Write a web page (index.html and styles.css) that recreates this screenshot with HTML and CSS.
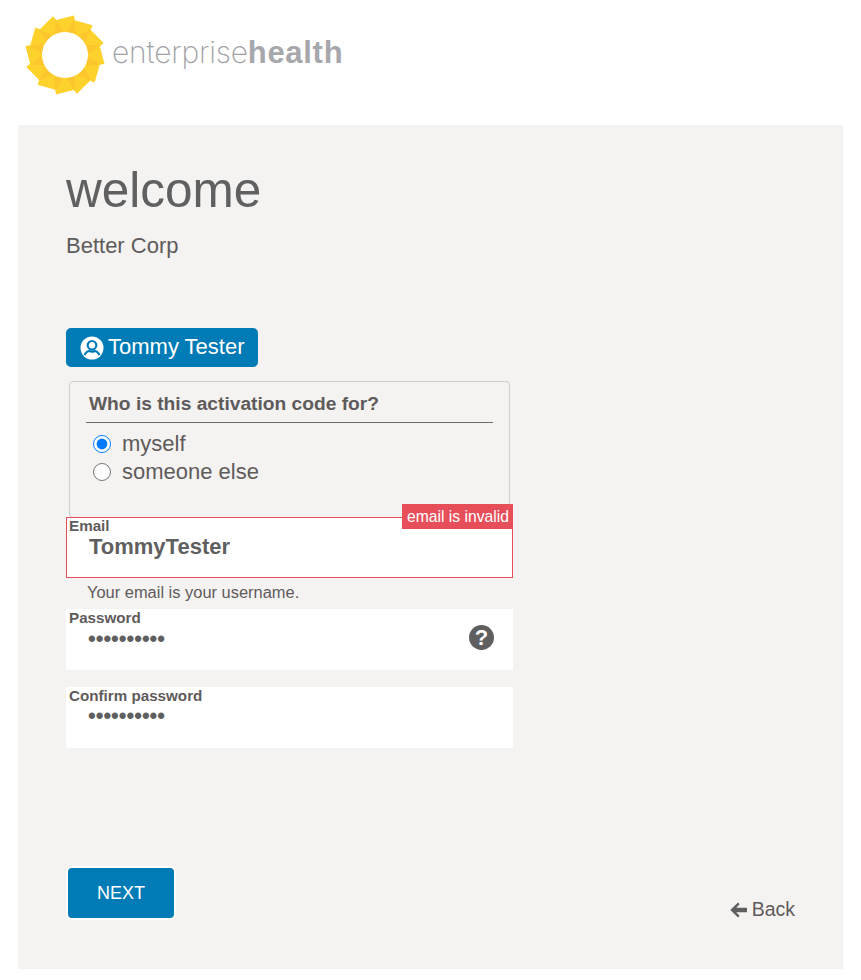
FILE: index.html
```html
<!DOCTYPE html>
<html lang="en">
<head>
    <meta charset="UTF-8">
    <meta name="viewport" content="width=device-width, initial-scale=1.0">
    <title>Welcome</title>
    <link rel="stylesheet" href="styles.css">
</head>
<body>
    <header class="top">
        <svg class="sun" width="82" height="82" viewBox="-41 -41 82 82" aria-hidden="true">
            <defs>
                <polygon id="shade" points="9,-35 1,-22 11,-22" fill="#fdc52e"/>
            </defs>
            <polygon fill="#fed22c" points="9,-39.500 9.800,-34.700 27.500,-29.700 25.800,-25.100 38.700,-12 34.900,-8.800 39.500,9 34.700,9.800 29.700,27.500 25.100,25.800 12,38.700 8.800,34.900 -9,39.500 -9.800,34.700 -27.500,29.700 -25.800,25.100 -38.700,12 -34.900,8.800 -39.500,-9 -34.700,-9.800 -29.700,-27.500 -25.100,-25.800 -12,-38.700 -8.800,-34.900"/>
            <use href="#shade"/>
            <use href="#shade" transform="rotate(30)"/>
            <use href="#shade" transform="rotate(60)"/>
            <use href="#shade" transform="rotate(90)"/>
            <use href="#shade" transform="rotate(120)"/>
            <use href="#shade" transform="rotate(150)"/>
            <use href="#shade" transform="rotate(180)"/>
            <use href="#shade" transform="rotate(210)"/>
            <use href="#shade" transform="rotate(240)"/>
            <use href="#shade" transform="rotate(270)"/>
            <use href="#shade" transform="rotate(300)"/>
            <use href="#shade" transform="rotate(330)"/>
            <circle r="23" fill="#fff"/>
        </svg>
        <div class="brand">enterprise<b>health</b></div>
    </header>

    <main class="panel">
        <h1>welcome</h1>
        <p class="company">Better Corp</p>

        <div class="user-tag">
            <svg width="24" height="24" viewBox="0 0 24 24" aria-hidden="true">
                <circle cx="12" cy="12" r="11.500" fill="#fff"/>
                <circle cx="12" cy="9.300" r="4.300" fill="none" stroke="#007bb5" stroke-width="2.200"/>
                <path d="M4.600 19.200c1.200-3 3.400-4.200 4.900-4.200 1 .5 1.700.7 2.500.7s1.600-.2 2.500-.7c1.600 0 3.700 1.200 4.900 4.200" fill="none" stroke="#007bb5" stroke-width="2.200"/>
            </svg>
            <span>Tommy Tester</span>
        </div>

        <form class="signup">
            <fieldset class="who">
                <legend>Who is this activation code for?</legend>
                <label class="choice"><input type="radio" name="who" checked> myself</label>
                <label class="choice"><input type="radio" name="who"> someone else</label>
            </fieldset>

            <div class="field invalid">
                <label for="email">Email</label>
                <input id="email" type="text" value="TommyTester">
                <span class="error">email is invalid</span>
            </div>
            <div class="hint">Your email is your username.</div>

            <div class="field">
                <label for="pw">Password</label>
                <input id="pw" type="password" value="1234567890">
                <span class="help">?</span>
            </div>

            <div class="field gap">
                <label for="pw2">Confirm password</label>
                <input id="pw2" type="password" value="1234567890">
            </div>
        </form>

        <div class="actions">
            <button class="next" type="button">NEXT</button>
            <a class="back" href="#">
                <svg width="17" height="16" viewBox="0 0 17 16" aria-hidden="true">
                    <path d="M8 .6 9.600 2.200 6.200 5.800H17v4.400H6.200l3.400 3.600L8 15.400.3 8z" fill="#5f5f5f"/>
                </svg>
                Back
            </a>
        </div>
    </main>
</body>
</html>
```

FILE: styles.css
```css
* {
    box-sizing: border-box;
    font-family: "Liberation Sans", Arial, sans-serif;
}
body {
    margin: 0;
    background-color: white;
    color: #5f5b5b;
}
.top {
    height: 125px;
    padding: 14px 0 0 24px;
    display: flex;
    align-items: flex-start;
}
.sun {
    flex: none;
}
.brand {
    margin: 18px 0 0 6px;
    font-family: Inter, sans-serif;
    font-weight: 200;
    font-size: 30px;
    letter-spacing: -0.2px;
    line-height: 40px;
    color: #a0a1a5;
}
.brand b {
    font-family: "Liberation Sans", sans-serif;
    font-weight: 700;
    font-size: 31px;
    letter-spacing: 0.7px;
    color: #a7a8ab;
}
.panel {
    height: 844px;
    margin: 0 18px;
    padding: 36px 48px 0;
    background-color: #f4f3f2;
}
h1 {
    margin: 0;
    font-size: 49.5px;
    font-weight: 400;
    line-height: 58px;
    color: #606060;
}
.company {
    margin: 14px 0 0;
    font-size: 22px;
    line-height: 26px;
}
.user-tag {
    width: 192px;
    height: 39px;
    margin-top: 69px;
    padding-left: 14px;
    display: flex;
    align-items: center;
    gap: 4px;
    background-color: #007bb5;
    border-radius: 5px;
    color: white;
    font-size: 22px;
}
.user-tag span {
    margin-top: -2px;
}
.signup {
    width: 447px;
}
.who {
    position: relative;
    width: 441px;
    height: 137px;
    margin: 14px 0 0 3px;
    padding: 48px 0 0 23px;
    border: 1px solid #cccccc;
    border-radius: 4px;
}
.who legend {
    position: absolute;
    top: 0;
    left: 16px;
    width: 407px;
    height: 41px;
    padding: 11px 0 0 3px;
    border-bottom: 1px solid #6b6b6b;
    font-size: 19.2px;
    font-weight: 700;
    line-height: 22px;
}
.choice {
    height: 28px;
    display: flex;
    align-items: center;
    gap: 11px;
    font-size: 22px;
}
.choice input {
    width: 18px;
    height: 18px;
    margin: 0;
    accent-color: #007bff;
}
.field {
    position: relative;
    height: 61px;
    padding-left: 3px;
    background-color: white;
}
.field label {
    display: block;
    font-size: 15.2px;
    font-weight: 700;
    line-height: 18px;
}
.field input {
    display: block;
    width: 360px;
    height: 26px;
    margin: -1px 0 0 19px;
    padding: 0;
    border: 0;
    outline: 0;
    background: transparent;
    color: #5f5f5f;
    font-size: 22px;
    font-weight: 700;
}
.invalid {
    margin-top: -1px;
    padding-left: 2px;
    border: 1px solid #e64f59;
}
.invalid label {
    margin-top: -1px;
}
.invalid input {
    margin: -1px 0 0 20px;
}
.error {
    position: absolute;
    top: -14px;
    right: -1px;
    height: 25px;
    padding: 0 4px 0 5px;
    background-color: #e64f59;
    color: white;
    font-size: 15.7px;
    line-height: 25px;
}
.hint {
    height: 31px;
    padding-left: 21px;
    font-size: 16.45px;
    line-height: 29px;
}
.help {
    position: absolute;
    top: 16px;
    right: 19px;
    width: 25px;
    height: 25px;
    border-radius: 50%;
    background-color: #5f5f5f;
    color: white;
    font-size: 22px;
    font-weight: 700;
    line-height: 25px;
    text-align: center;
}
.gap {
    margin-top: 17px;
}
.gap input {
    margin-top: -2px;
}
.actions {
    margin-top: 118px;
    display: flex;
    justify-content: space-between;
    align-items: flex-start;
}
.next {
    width: 110px;
    height: 54px;
    padding: 0;
    border: 2px solid white;
    border-radius: 6px;
    background-color: #007bb5;
    color: white;
    font-size: 18px;
}
.back {
    margin-top: 32px;
    display: flex;
    align-items: center;
    gap: 5px;
    color: #5f5b5b;
    font-size: 19.5px;
    line-height: 23px;
    text-decoration: none;
}
```
